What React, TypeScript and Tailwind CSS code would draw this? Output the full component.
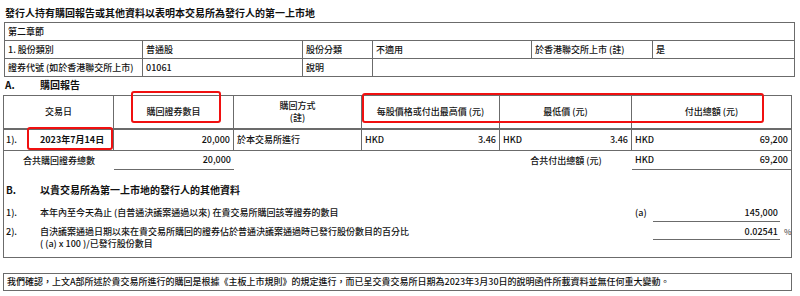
const font = { fontFamily: '"Noto Sans CJK TC", "Noto Sans", sans-serif' };

function Cell({ w, children, last, className = '' }: { w: string; children?: React.ReactNode; last?: boolean; className?: string }) {
  return (
    <div className={`${w} flex items-center px-[3px] ${last ? '' : 'border-r border-[#6b6b6b]'} ${className}`}>
      {children}
    </div>
  );
}

export default function App() {
  return (
    <div className="relative w-[800px] h-[296px] bg-white text-[#111] font-medium overflow-hidden" style={font}>
      {/* title */}
      <div className="h-[22px] pl-[5px] pt-[6px] text-[10px] leading-[14px] font-semibold">
        發行人持有購回報告或其他資料以表明本交易所為發行人的第一上市地
      </div>

      {/* 第二章節 */}
      <div className="ml-[4px] w-[791px] border-t border-x border-[#6b6b6b] text-[9px]">
        <div className="h-[18px] flex items-center px-[3px] border-b border-[#6b6b6b]">第二章節</div>
        <div className="h-[18px] flex border-b border-[#6b6b6b]">
          <Cell w="w-[138px]">1. 股份類別</Cell>
          <Cell w="w-[160px]">普通股</Cell>
          <Cell w="w-[70px]">股份分類</Cell>
          <Cell w="w-[159px]">不適用</Cell>
          <Cell w="w-[121px]">於香港聯交所上市 (註)</Cell>
          <Cell w="flex-1" last>是</Cell>
        </div>
        <div className="h-[18px] flex border-b border-[#6b6b6b]">
          <Cell w="w-[138px]">證券代號 (如於香港聯交所上市)</Cell>
          <Cell w="w-[160px]">01061</Cell>
          <Cell w="w-[70px]">說明</Cell>
          <Cell w="flex-1" last />
        </div>
      </div>

      <div className="h-[18px] flex items-center pl-[5px] pb-[3px] text-[10px] font-semibold">
        <span className="w-[35px]">A.</span>
        <span>購回報告</span>
      </div>

      {/* section A + B box */}
      <div className="ml-[3px] w-[789px] border border-[#6b6b6b] text-[9px] pb-[7px]">
        <div className="h-[34px] flex border-b-2 border-[#6b6b6b]">
          <Cell w="w-[110px] justify-center">交易日</Cell>
          <Cell w="w-[120px] justify-center">購回證券數目</Cell>
          <Cell w="w-[128px] justify-center text-center leading-[12px]">購回方式<br />(註)</Cell>
          <Cell w="w-[138px] justify-center">每股價格或付出最高價 (元)</Cell>
          <Cell w="w-[132px] justify-center">最低價 (元)</Cell>
          <Cell w="flex-1 justify-center" last>付出總額 (元)</Cell>
        </div>
        <div className="h-[21px] flex border-b border-[#6b6b6b]">
          <Cell w="w-[110px] pl-[2px]">
            <span className="w-[34px]">1).</span>
            <span className="font-semibold">2023年7月14日</span>
          </Cell>
          <Cell w="w-[120px] justify-end">20,000</Cell>
          <Cell w="w-[128px]">於本交易所進行</Cell>
          <Cell w="w-[138px] justify-between"><span>HKD</span><span>3.46</span></Cell>
          <Cell w="w-[132px] justify-between"><span>HKD</span><span>3.46</span></Cell>
          <Cell w="flex-1 justify-between" last><span>HKD</span><span>69,200</span></Cell>
        </div>
        <div className="h-[19px] flex">
          <div className="w-[110px] flex items-center justify-center">合共購回證券總數</div>
          <div className="w-[120px] flex items-center justify-end px-[3px] border-b border-[#6b6b6b]">20,000</div>
          <div className="w-[128px]" />
          <div className="w-[138px]" />
          <div className="w-[132px] flex items-center justify-center">合共付出總額 (元)</div>
          <div className="flex-1 flex items-center justify-between px-[3px] border-b border-[#6b6b6b]">
            <span>HKD</span><span>69,200</span>
          </div>
        </div>

        <div className="mt-[9px] h-[20px] flex items-center pl-[2px] text-[10px] font-semibold">
          <span className="w-[34px]">B.</span>
          <span>以貴交易所為第一上市地的發行人的其他資料</span>
        </div>

        <div className="mt-[5px] h-[18px] grid grid-cols-[34px_1fr_18px_127px_11px] items-center pl-[2px]">
          <span>1).</span>
          <span>本年內至今天為止 (自普通決議案通過以來) 在貴交易所購回該等證券的數目</span>
          <span>(a)</span>
          <div className="h-[18px] flex items-center justify-end pr-[2px] border-b border-[#6b6b6b]">145,000</div>
          <span />
        </div>

        <div className="mt-[2px] grid grid-cols-[34px_1fr_18px_127px_11px] items-start pl-[2px]">
          <span className="pt-[2px] leading-[12px]">2).</span>
          <span className="pt-[2px] leading-[12px]">
            自決議案通過日期以來在貴交易所購回的證券佔於普通決議案通過時已發行股份數目的百分比
            <br />( (a) x 100 )/已發行股份數目
          </span>
          <span />
          <div className="h-[16px] flex items-center justify-end pr-[2px] border-b border-[#6b6b6b]">0.02541</div>
          <span className="h-[16px] flex items-center pl-[4px] text-[8px] text-[#555]">%</span>
        </div>
      </div>

      {/* footer */}
      <div className="mt-[15px] ml-[3px] w-[789px] h-[18px] border border-[#6b6b6b] flex items-center px-[3px] text-[9px]">
        我們確認，上文A部所述於貴交易所進行的購回是根據《主板上市規則》的規定進行，而已呈交貴交易所日期為2023年3月30日的說明函件所載資料並無任何重大變動。
      </div>

      {/* red annotation boxes */}
      <div className="absolute left-[131px] top-[91px] w-[90px] h-[32px] border-2 border-[#f01010] rounded-[3px]" />
      <div className="absolute left-[362px] top-[93px] w-[402px] h-[30px] border-2 border-[#f01010] rounded-[3px]" />
      <div className="absolute left-[27px] top-[127px] w-[86px] h-[23px] border-2 border-[#f01010] rounded-[3px]" />
    </div>
  );
}
